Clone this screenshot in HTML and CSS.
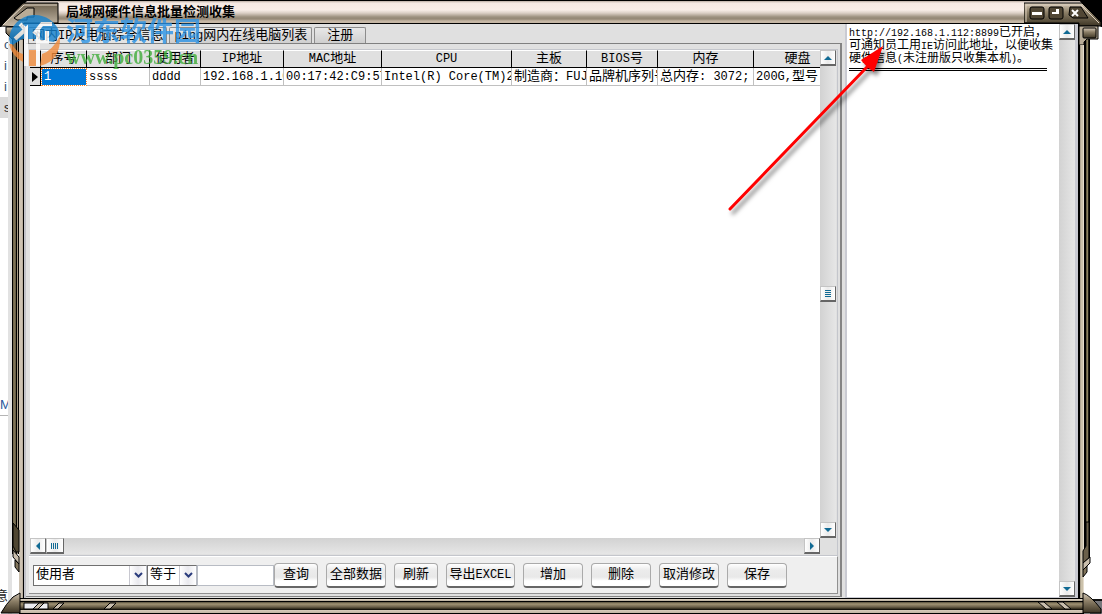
FILE: index.html
```
<!DOCTYPE html>
<html lang="zh-CN">
<head>
    <meta charset="UTF-8">
    <meta name="viewport" content="width=device-width, initial-scale=1.0">
    <title>局域网硬件信息批量检测收集</title>
    <link rel="stylesheet" href="styles.css">
</head>
<body>
    <header class="titlebar">
        <h1>局域网硬件信息批量检测收集</h1>
    </header>

    <div class="middle">
        <div class="backdrop">
            <span>o</span>
            <span>i</span>
            <span>i</span>
            <span class="selected">s</span>
            <span class="letter">M</span>
            <span class="last">意</span>
        </div>
        <div class="rail rail-left"></div>

        <div class="frame">
            <main class="client">
                <section class="left">
                    <nav class="tabs">
                        <button class="tab active">网内<span class="en">IP</span>及电脑综合信息</button>
                        <button class="tab"><span class="en">ping</span>网内在线电脑列表</button>
                        <button class="tab">注册</button>
                    </nav>

                    <div class="page">
                        <div class="grid">
                            <div class="table-box">
                                <table>
                                    <colgroup>
                                        <col class="c-mark"><col class="c-no"><col class="c-dept"><col class="c-user">
                                        <col class="c-ip"><col class="c-mac"><col class="c-cpu"><col class="c-board">
                                        <col class="c-bios"><col class="c-mem"><col class="c-disk">
                                    </colgroup>
                                    <thead>
                                        <tr>
                                            <th></th>
                                            <th>序号</th>
                                            <th>部门</th>
                                            <th>使用者</th>
                                            <th><span class="en">IP</span>地址</th>
                                            <th><span class="en">MAC</span>地址</th>
                                            <th><span class="en">CPU</span></th>
                                            <th>主板</th>
                                            <th><span class="en">BIOS</span>号</th>
                                            <th>内存</th>
                                            <th>硬盘</th>
                                        </tr>
                                    </thead>
                                    <tbody>
                                        <tr>
                                            <td class="mark"><svg width="6" height="10" viewBox="0 0 6 10"><path d="M0 0L6 5L0 10z"/></svg></td>
                                            <td class="current"><span class="en">1</span></td>
                                            <td><span class="en">ssss</span></td>
                                            <td><span class="en">dddd</span></td>
                                            <td><span class="en">192.168.1.10</span></td>
                                            <td><span class="en">00:17:42:C9:57</span></td>
                                            <td><span class="en">Intel(R) Core(TM)2</span></td>
                                            <td>制造商：<span class="en">FUJ</span></td>
                                            <td>品牌机序列号</td>
                                            <td>总内存<span class="en">: 3072;</span></td>
                                            <td><span class="en">200G,</span>型号</td>
                                        </tr>
                                    </tbody>
                                </table>
                            </div>
                            <div class="vscroll">
                                <button class="arrow" aria-label="上"><svg width="8" height="4" viewBox="0 0 8 4"><path d="M4 0L8 4H0z"/></svg></button>
                                <button class="arrow" aria-label="滑块"><svg width="6" height="7" viewBox="0 0 6 7"><path d="M0 0h6v1H0zM0 2h6v1H0zM0 4h6v1H0zM0 6h6v1H0z"/></svg></button>
                                <button class="arrow" aria-label="下"><svg width="8" height="4" viewBox="0 0 8 4"><path d="M0 0H8L4 4z"/></svg></button>
                            </div>
                            <div class="hscroll">
                                <button class="arrow" aria-label="左"><svg width="4" height="8" viewBox="0 0 4 8"><path d="M4 0V8L0 4z"/></svg></button>
                                <button class="arrow thumb" aria-label="滑块"><svg width="8" height="6" viewBox="0 0 8 6"><path d="M0 0h1v6H0zM2 0h1v6H2zM4 0h1v6H4zM6 0h1v6H6z"/></svg></button>
                                <button class="arrow end" aria-label="右"><svg width="4" height="8" viewBox="0 0 4 8"><path d="M0 0L4 4L0 8z"/></svg></button>
                            </div>
                        </div>

                        <form class="toolbar" onsubmit="return false">
                            <div class="combo field">
                                <select aria-label="字段"><option>使用者</option></select>
                                <span class="drop"><svg width="9" height="7" viewBox="0 0 9 7"><path d="M1 1L4.500 4.500L8 1"/></svg></span>
                            </div>
                            <div class="combo">
                                <select aria-label="条件"><option>等于</option></select>
                                <span class="drop"><svg width="9" height="7" viewBox="0 0 9 7"><path d="M1 1L4.500 4.500L8 1"/></svg></span>
                            </div>
                            <input type="text" aria-label="查询内容">
                            <div class="buttons">
                                <button class="btn small">查询</button>
                                <button class="btn">全部数据</button>
                                <button class="btn small">刷新</button>
                                <button class="btn wide">导出<span class="en">EXCEL</span></button>
                                <button class="btn">增加</button>
                                <button class="btn">删除</button>
                                <button class="btn">取消修改</button>
                                <button class="btn">保存</button>
                            </div>
                        </form>
                    </div>
                </section>

                <aside class="log">
                    <div class="log-text">
                        <p><span class="en">http://192.168.1.112:8899</span>已开启，<br>可通知员工用<span class="en">IE</span>访问此地址，以便收集<br>硬件信息<span class="en">(</span>未注册版只收集本机<span class="en">)</span>。</p>
                        <hr>
                    </div>
                    <div class="vscroll">
                        <button class="arrow" aria-label="上"><svg width="8" height="4" viewBox="0 0 8 4"><path d="M4 0L8 4H0z"/></svg></button>
                        <button class="arrow" aria-label="下"><svg width="8" height="4" viewBox="0 0 8 4"><path d="M0 0H8L4 4z"/></svg></button>
                    </div>
                </aside>
            </main>
        </div>

        <div class="rail rail-right"></div>
        <div class="outside"></div>
    </div>

    <!-- window skin corners -->
    <svg class="corner top-left" width="62" height="42" viewBox="0 0 62 42">
        <defs>
            <linearGradient id="metal" x1="0" y1="0" x2="0" y2="1">
                <stop offset="0" stop-color="#d6cab8"/>
                <stop offset="0.400" stop-color="#8d8068"/>
                <stop offset="1" stop-color="#3c3424"/>
            </linearGradient>
            <linearGradient id="tan" x1="0" y1="0" x2="0" y2="1">
                <stop offset="0" stop-color="#6b5f4c"/>
                <stop offset="1" stop-color="#c9bdab"/>
            </linearGradient>
        </defs>
        <path d="M0 0H28L1 27H0z" fill="#000"/>
        <path d="M1 26L23 3H58V23H24L20 27z" fill="url(#tan)" stroke="#000"/>
        <path d="M3 25L24 5H57" fill="none" stroke="#e8dccc"/>
        <path d="M14 18L27 8H34V17H27V20H17z" fill="#b8ab96" stroke="#000"/>
        <path d="M6 27H24V39H12L6 33z" fill="url(#metal)" stroke="#000"/>
    </svg>
    <svg class="corner top-right" width="78" height="45" viewBox="0 0 78 45">
        <path d="M55 0H78V27H77z" fill="#000"/>
        <path d="M0 3H58L77 22V26H55V23H0z" fill="url(#metal)" stroke="#000"/>
        <path d="M2 22V5H57L75 23" fill="none" stroke="#ddd0bf"/>
        <g fill="#514735" stroke="#000">
            <rect x="6" y="7" width="14" height="12" rx="2"/>
            <rect x="25" y="7" width="14" height="12" rx="2"/>
            <path d="M46 7H57L64 18H49L45 15z"/>
        </g>
        <path d="M8 12h10v3H8zM28 14V12H32V9H35V14z" fill="#fff"/>
        <path d="M48 10L54 16M54 10L48 16" stroke="#fff" stroke-width="2"/>
        <path d="M55 26H74V39H63L60 42V45H55z" fill="#b9ad98" stroke="#000"/>
        <rect x="59" y="28" width="13" height="10" rx="1" fill="url(#metal)" stroke="#000"/>
    </svg>
    <svg class="corner bottom-left" width="120" height="94" viewBox="0 0 120 94">
        <path d="M13 3L19 10V32L16 32L13 26z" fill="#4f4632" stroke="#000"/>
        <path d="M13 30L19 37V44L13 37z" fill="#c8bdac" stroke="#000"/>
        <path d="M15 40L19 44V52L15 47z" fill="#81745b" stroke="#000"/>
        <path d="M1 93Q6 84 13 77L20 73V93z" fill="url(#metal)" stroke="#000"/>
        <path d="M24 83H48V89H24z" fill="#ececf0" stroke="#000"/>
        <path d="M33 89L39 83H44L38 89zM53 89L59 83H64L58 89zM104 89L110 83H116L110 89z" fill="#c8bdac" stroke="#000"/>
    </svg>
    <svg class="corner bottom-right" width="70" height="94" viewBox="0 0 70 94">
        <path d="M51 31L54 26V2L57 2V38L51 43z" fill="#6b604a" stroke="#000"/>
        <path d="M51 43L58 37V43L51 50z" fill="#c8bdac" stroke="#000"/>
        <path d="M51 50L55 46V52L51 57z" fill="#81745b" stroke="#000"/>
        <path d="M58 80H70V94H58z" fill="#77777b"/>
        <path d="M58 80H70" stroke="#111" stroke-width="2"/>
        <path d="M51 73Q58 75 69 89V93H51z" fill="url(#metal)" stroke="#000"/>
        <path d="M6 82H12L20 89H14zM25 82H31L39 89H33z" fill="#c8bdac" stroke="#000"/>
    </svg>

    <div class="watermark">
        <svg width="56" height="56" viewBox="0 0 56 56">
            <path d="M1 27A26 26 0 0 1 52 22L46 30L28 27H14L3 34z" fill="#1482cf"/>
            <path d="M1 32Q4 44 15 50V42Q8 40 4 32zM21 38H29V54H21zM34 42Q44 39 52 24Q53 49 32 54z" fill="#f08a3a"/>
            <path d="M12 12L17 17M7 27L18 17V54M26 22L34 12H44M30 17V54M30 30H39V19" fill="none" stroke="#fff" stroke-width="4"/>
        </svg>
        <div class="words">
            <strong>河东软件园</strong>
            <span>www.pc0359.cn</span>
        </div>
    </div>

    <svg class="pointer" width="170" height="180" viewBox="0 0 170 180">
        <path d="M5 170L142 28" stroke="#ff0000" stroke-width="3" stroke-linecap="round"/>
        <path d="M158 7L149 33L142 28L136 21z" fill="#ff0000"/>
    </svg>
</body>
</html>
```
FILE: styles.css
```
* {
    box-sizing: border-box;
}
body {
    margin: 0;
    min-height: 100vh;
    display: flex;
    flex-direction: column;
    position: relative;
    overflow: hidden;
    background: #fff;
    color: #000;
    font-family: "Liberation Mono", "Noto Sans CJK SC", monospace;
    font-size: 13px;
    line-height: 16px;
}
button, input, select {
    font: inherit;
    color: inherit;
    margin: 0;
    padding: 0;
    border: 0;
    border-radius: 0;
}
svg {
    display: block;
}
.en {
    font-size: 12px;
}

/* title bar */
.titlebar {
    height: 24px;
    padding: 2px 0 0 66px;
    display: flex;
    align-items: center;
    border-top: 1px solid #000;
    border-bottom: 1px solid #000;
    background: linear-gradient(#b9aca2 0, #f5e9e3 2px, #f8ede7 9px, #dcd0c6 12px, #9c907e 16px, #958876 18px, #c5b6a4 20px, #c5b6a4 100%);
}
.titlebar h1 {
    margin: 0;
    font-size: 13px;
    font-weight: bold;
    white-space: nowrap;
}

/* skin frame */
.middle {
    flex: 1;
    display: flex;
    align-items: stretch;
}
.backdrop {
    width: 12px;
    padding-top: 10px;
    border-right: 4px solid #e2e2e2;
    display: flex;
    flex-direction: column;
    overflow: hidden;
    line-height: 21px;
    font-family: "Liberation Sans", "Noto Sans CJK SC", sans-serif;
}
.backdrop span {
    padding-left: 4px;
    color: #35506e;
}
.backdrop .selected {
    background: #dadada;
    color: #222;
}
.backdrop .letter {
    margin-top: 276px;
    padding-left: 0;
    border-bottom: 1px solid #b5b5b5;
    color: #2b579a;
}
.backdrop .last {
    margin: auto 0 8px -5px;
    padding: 0;
    color: #222;
}
.rail-left {
    width: 7px;
    margin-bottom: 60px;
    background: linear-gradient(90deg, #000 1px, #6e634a 1px, #857a5e 3px, #4d452f 4px, #000 4px, #000 5px, #a89c88 5px, #a89c88 6px, #000 6px);
}
.rail-right {
    width: 6px;
    margin-bottom: 50px;
    background: linear-gradient(90deg, #000 2px, #3d3824 2px, #8b8160 3px, #8b8160 4px, #3d3824 4px, #000 5px);
}
.outside {
    width: 12px;
}
.frame {
    flex: 1;
    min-width: 0;
    display: flex;
    padding: 0 6px 16px 5px;
    background:
        linear-gradient(#000 1px, #e2d9cb 1px, #b5aa97 3px, #000 3px, #000 4px, #57503c 4px, #a19374 6px, #6a5f48 9px, #2c2618 11px, #000 12px, #d8ccbc 12px, #c0b4a2 15px, #000 15px) bottom / 100% 16px no-repeat,
        linear-gradient(90deg, #cdc2b2 3px, #a89c8a 4px, #000 4px) left / 5px 100% no-repeat,
        linear-gradient(90deg, #000 2px, #938a78 2px, #cbc1ab 3px, #cbc1ab 5px, #e4dccd 5px) right / 6px 100% no-repeat;
}
.client {
    flex: 1;
    min-width: 0;
    display: flex;
    background: #e0e0e0;
}

/* tabs */
.left {
    flex: 1;
    min-width: 0;
    display: flex;
    flex-direction: column;
    border-left: 2px solid #c2c2c8;
    padding-bottom: 1px;
}
.tabs {
    height: 20px;
    padding: 3px 0 0 2px;
    display: flex;
    gap: 2px;
    border-bottom: 1px solid #808080;
}
.tab {
    padding: 0 4px;
    border: 1px solid #8c8c8c;
    border-bottom: 0;
    border-radius: 2px 2px 0 0;
    background: linear-gradient(#e8e8e8, #cfcfcf);
    white-space: nowrap;
}
.tab.active {
    padding: 0 3px;
    background: #e4e4e4;
}
.tab:last-child {
    padding: 0 12px;
}
.page {
    flex: 1;
    display: flex;
    flex-direction: column;
    padding: 5px 2px 2px 3px;
    border-right: 2px solid #848484;
    border-bottom: 1px solid #848484;
}

/* data grid */
.grid {
    flex: 1;
    min-height: 0;
    display: grid;
    grid-template-columns: minmax(0, 1fr) 16px;
    grid-template-rows: 1fr 16px;
    padding: 0 1px 1px;
    border: 1px solid #c4c6cc;
    border-left: 0;
}
.table-box {
    overflow: hidden;
    background: #fff;
}
table {
    width: 812px;
    table-layout: fixed;
    border-collapse: separate;
    border-spacing: 0;
}
.c-mark { width: 11px; }
.c-no { width: 46px; }
.c-dept { width: 63px; }
.c-user { width: 51px; }
.c-ip { width: 83px; }
.c-mac { width: 98px; }
.c-cpu { width: 130px; }
.c-board { width: 75px; }
.c-bios { width: 71px; }
.c-mem { width: 96px; }
.c-disk { width: 88px; }
th, td {
    height: 18px;
    overflow: hidden;
    white-space: pre;
    line-height: 16px;
}
th {
    padding: 0;
    font-weight: normal;
    background: #e0e0e0;
    border-top: 1px solid #fff;
    border-right: 1px solid #000;
    border-bottom: 1px solid #000;
}
td {
    padding: 0 0 0 2px;
    border-right: 1px solid #c0c0c0;
    border-bottom: 1px solid #c0c0c0;
}
td.mark {
    background: #e0e0e0;
    border-color: #000;
}
td.current {
    background: #0078d7;
    color: #fff;
    border: 1px dotted #ff8728;
    background-clip: padding-box;
}

/* scroll bars */
.vscroll {
    width: 16px;
    display: flex;
    flex-direction: column;
    justify-content: space-between;
    background: linear-gradient(90deg, #d2d2d2, #e6e6e6);
}
.hscroll {
    display: flex;
    background: linear-gradient(#d2d2d2, #e6e6e6);
}
.arrow {
    width: 16px;
    height: 16px;
    display: flex;
    align-items: center;
    justify-content: center;
    border: 1px solid #c4c4c4;
    border-right-color: #666;
    border-bottom: 2px solid #666;
    background: linear-gradient(90deg, #fff, #eaeaea 50%, #fff);
    fill: #106a94;
}
.thumb {
    width: 18px;
}
.end {
    margin-left: auto;
}

/* query toolbar */
.toolbar {
    height: 38px;
    padding: 0 4px;
    display: flex;
    align-items: center;
    background: #efefef;
    border-top: 1px solid #fff;
    border-right: 1px solid #909090;
    border-bottom: 1px solid #909090;
}
.combo {
    display: flex;
    position: relative;
    width: 50px;
    height: 21px;
}
.combo.field {
    width: 114px;
}
.combo select {
    width: 100%;
    padding-left: 2px;
    appearance: none;
    background: #fff;
    border: 1px solid #707070;
    border-right-color: #b8bcc4;
}
.drop {
    position: absolute;
    top: 1px;
    right: 1px;
    bottom: 1px;
    width: 17px;
    display: flex;
    align-items: center;
    justify-content: center;
    border-left: 1px solid #c8c8d0;
    background: linear-gradient(90deg, #fff, #e9e9ee 50%, #fff);
    pointer-events: none;
}
.drop path {
    fill: none;
    stroke: #2a3c7c;
    stroke-width: 2;
}
.toolbar input {
    width: 77px;
    height: 21px;
    background: #fff;
    border: 1px solid #b8bcc4;
}
.buttons {
    display: flex;
    gap: 8px;
}
.btn {
    width: 60px;
    height: 25px;
    border: 1px solid #aaa;
    border-bottom: 2px solid #666;
    border-radius: 4px;
    background: linear-gradient(#fff 0, #ececec 6px, #e8e8e8 13px, #fff 17px);
    white-space: nowrap;
}
.btn.small {
    width: 44px;
}
.btn.wide {
    width: 69px;
}

/* message pane */
.log {
    width: 233px;
    margin-left: 3px;
    display: flex;
    border: solid #c9cad2;
    border-width: 0 3px 1px 2px;
}
.log-text {
    flex: 1;
    padding: 3px 2px;
    background: #fff;
    font-size: 12px;
    line-height: 12px;
    white-space: nowrap;
}
.log-text .en {
    font-size: 10px;
}
.log p {
    margin: 0 0 2px;
}
.log hr {
    width: 198px;
    margin: 0;
    border: 0;
    border-top: 3px double #000;
}

/* overlays */
.corner, .watermark, .pointer {
    position: absolute;
    pointer-events: none;
}
.top-left { top: 0; left: 0; }
.top-right { top: 0; right: 0; }
.bottom-left { bottom: 0; left: 0; }
.bottom-right { bottom: 0; right: 0; }
.watermark {
    top: 12px;
    left: 8px;
    display: flex;
    gap: 2px;
    opacity: 0.8;
}
.words {
    display: flex;
    flex-direction: column;
    padding-top: 3px;
}
.words strong {
    font-family: "Noto Sans CJK SC", sans-serif;
    font-size: 27px;
    line-height: 30px;
    color: #2b93e6;
}
.words span {
    font: bold 20px/24px "Liberation Serif", serif;
    color: #3fae3a;
}
.pointer {
    top: 39px;
    left: 725px;
    filter: drop-shadow(3px 4px 2px rgba(0, 0, 0, 0.5));
}
```
